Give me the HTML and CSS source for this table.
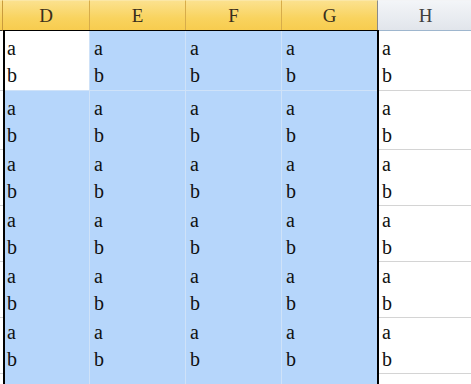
FILE: index.html
```html
<!DOCTYPE html>
<html>
<head>
<meta charset="utf-8">
<link rel="stylesheet" href="styles.css">
</head>
<body>
<div class="sheet">
  <div class="hdr">
    <div class="hc sel edge"></div>
    <div class="hc sel">D</div>
    <div class="hc sel">E</div>
    <div class="hc sel">F</div>
    <div class="hc sel">G</div>
    <div class="hc">H</div>
  </div>
  <div class="grid" id="grid"></div>
  <div class="selbox"></div>
</div>
<script>
  var g = document.getElementById('grid');
  var html = '';
  for (var r = 0; r < 7; r++) {
    var cls = r === 0 ? 'row first' : 'row';
    html += '<div class="' + cls + '">';
    html += '<div class="c edge"></div>';
    for (var c = 0; c < 5; c++) {
      var k = 'c';
      if (c < 4) k += ' s';
      if (r === 0 && c === 0) k += ' act';
      var txt = r < 6 ? '<span>a</span><span>b</span>' : '';
      html += '<div class="' + k + '">' + txt + '</div>';
    }
    html += '</div>';
  }
  g.innerHTML = html;
</script>
</body>
</html>
```
FILE: styles.css
```css
html, body {
  margin: 0;
  padding: 0;
  background: #fff;
  overflow: hidden;
}
.sheet {
  position: relative;
  width: 471px;
  height: 384px;
  overflow: hidden;
  font-family: "Liberation Serif", "DejaVu Serif", serif;
}
.hdr {
  display: grid;
  grid-template-columns: 3px 87px 96px 96px 96px 96px;
  height: 31px;
}
.hc {
  box-sizing: border-box;
  height: 31px;
  border-right: 1px solid #9eb6ce;
  border-bottom: 1px solid #9eb6ce;
  border-top: 1px solid #f3f4f6;
  background: linear-gradient(#f3f5f8, #e1e5eb);
  color: #404040;
  font-size: 19px;
  display: flex;
  align-items: center;
  justify-content: center;
  padding-top: 1px;
}
.hc.sel {
  background: linear-gradient(#fbe18e, #f9d35e 60%, #f7cc4f);
  border-top-color: #fbe7a6;
  border-right-color: #d7ac4a;
  border-bottom-color: #303030;
  color: #3a2f1c;
}
.hc.edge {
  border-right-color: #c99b3c;
}
.hc.sel:nth-child(5) {
  border-right-color: #8a8a8a;
}
.grid {
  display: flex;
  flex-direction: column;
}
.row {
  display: grid;
  grid-template-columns: 3px 87px 96px 96px 96px 96px;
  height: 56px;
}
.row.first {
  height: 60px;
}
.c {
  box-sizing: border-box;
  border-right: 1px solid #d4d4d4;
  border-bottom: 1px solid #d4d4d4;
  display: flex;
  flex-direction: column;
  padding: 4px 0 0 4px;
  font-size: 20px;
  line-height: 27px;
  color: #111;
}
.c.edge {
  border-right: none;
  padding: 0;
}
.c.s {
  background: #b6d6fb;
  border-right-color: #cfe2f8;
  border-bottom-color: #cfe2f8;
}
.c.act {
  background: #fff;
}
.selbox {
  position: absolute;
  left: 3px;
  top: 30px;
  width: 376px;
  height: 400px;
  box-sizing: border-box;
  border-left: 2px solid #000;
  border-right: 2px solid #000;
  border-top: 1px solid #000;
  pointer-events: none;
}
```
